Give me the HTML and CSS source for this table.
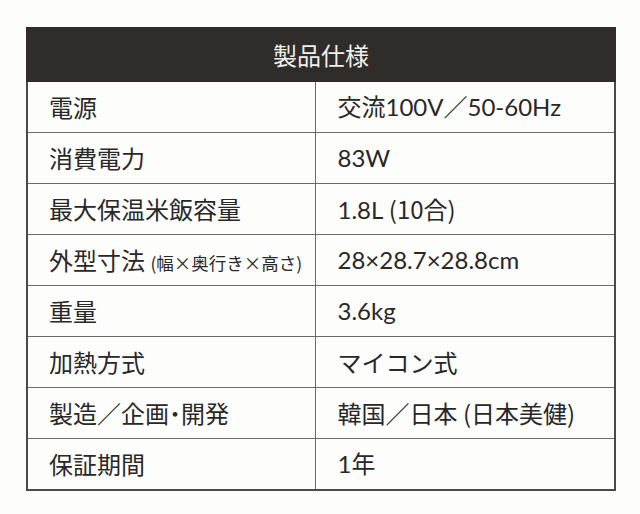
FILE: index.html
```html
<!DOCTYPE html>
<html lang="ja">
<head>
<meta charset="utf-8">
<title>製品仕様</title>
<link rel="stylesheet" href="styles.css">
</head>
<body>
<div class="page">
  <table class="spec">
    <colgroup><col class="col-label"><col class="col-value"></colgroup>
    <thead>
      <tr><th colspan="2" class="head">製品仕様</th></tr>
    </thead>
    <tbody>
      <tr><td class="label">電源</td><td class="value">交流100V／50-60Hz</td></tr>
      <tr><td class="label">消費電力</td><td class="value">83W</td></tr>
      <tr><td class="label">最大保温米飯容量</td><td class="value">1.8L <span class="cjk">(10合)</span></td></tr>
      <tr><td class="label">外型寸法 <span class="sub">(幅×奥行き×高さ)</span></td><td class="value">28×28.7×28.8cm</td></tr>
      <tr><td class="label">重量</td><td class="value">3.6kg</td></tr>
      <tr><td class="label">加熱方式</td><td class="value cjk">マイコン式</td></tr>
      <tr><td class="label">製造／企画<span class="dot">･</span>開発</td><td class="value cjk">韓国／日本 (日本美健)</td></tr>
      <tr><td class="label">保証期間</td><td class="value">1年</td></tr>
    </tbody>
  </table>
</div>
</body>
</html>
```

FILE: styles.css
```css
html, body {
  margin: 0;
  padding: 0;
  background: #fdfdfb;
}
.page {
  padding: 27px 0 0 26px;
  font-family: "Lato", "Noto Sans CJK JP", sans-serif;
  color: #282828;
}
.spec {
  width: 590px;
  border-collapse: collapse;
  border: 2px solid #4a4a48;
  table-layout: fixed;
}
.col-label {
  width: 288px;
}
.head {
  height: 51px;
  padding: 0;
  background: #2f2c29;
  color: #f1f0ec;
  font-family: "Noto Sans CJK JP", sans-serif;
  font-weight: 400;
  font-size: 24px;
  text-align: center;
  border: 2px solid #2f2c29;
}
.spec td {
  height: 50px;
  padding: 0;
  border: 1.5px solid #6a6a66;
  font-size: 24px;
  line-height: 1;
  vertical-align: middle;
  white-space: nowrap;
  font-weight: 400;
}
.label {
  padding-left: 21px !important;
  font-family: "Noto Sans CJK JP", sans-serif;
}
.value {
  padding-left: 22px !important;
}
.cjk {
  font-family: "Noto Sans CJK JP", sans-serif;
}
.sub {
  font-size: 17.5px;
}
.dot {
  font-weight: 700;
}
```
